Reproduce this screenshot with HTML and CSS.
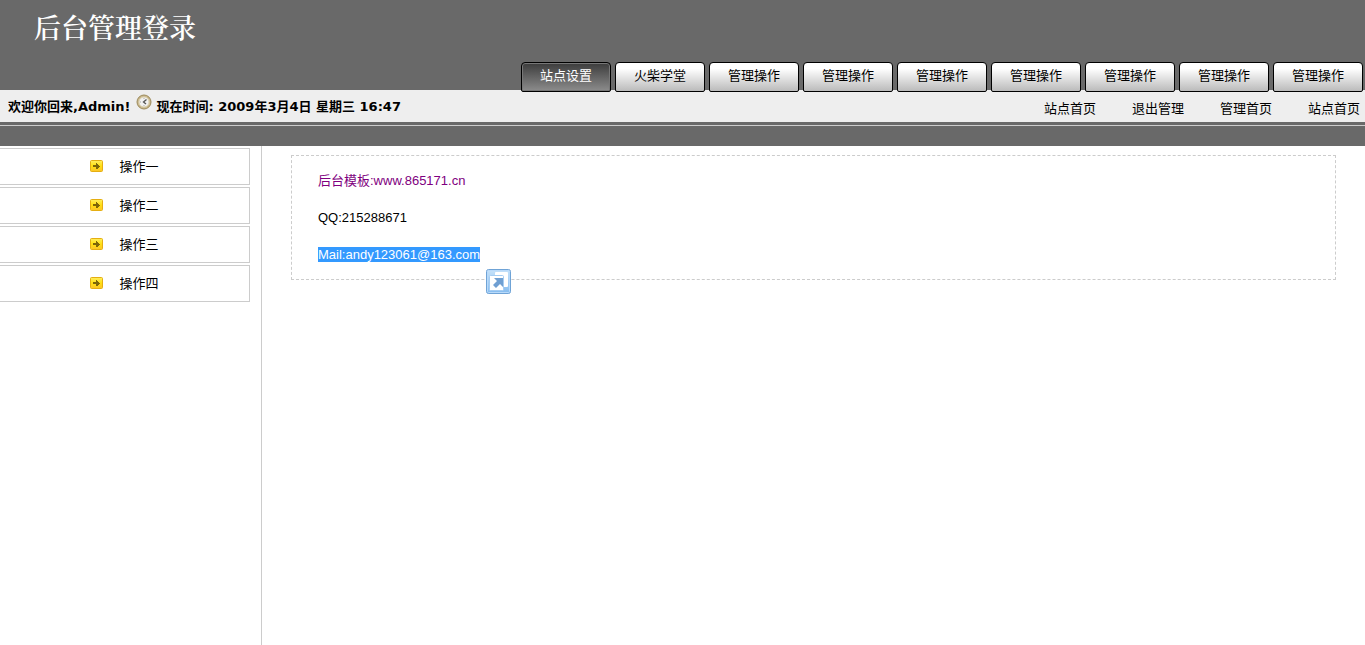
FILE: index.html
```html
<!DOCTYPE html>
<html lang="zh-CN">
<head>
    <meta charset="UTF-8">
    <meta name="viewport" content="width=device-width, initial-scale=1.0">
    <title>后台管理登录</title>
    <link rel="stylesheet" href="styles.css">
</head>
<body>
    <header class="header">
        <h1 class="title">后台管理登录</h1>
        <nav class="tabs">
            <a href="#" class="tab active">站点设置</a>
            <a href="#" class="tab">火柴学堂</a>
            <a href="#" class="tab">管理操作</a>
            <a href="#" class="tab">管理操作</a>
            <a href="#" class="tab">管理操作</a>
            <a href="#" class="tab">管理操作</a>
            <a href="#" class="tab">管理操作</a>
            <a href="#" class="tab">管理操作</a>
            <a href="#" class="tab">管理操作</a>
        </nav>
    </header>

    <div class="bar">
        <div class="welcome">
            <span>欢迎你回来,Admin!</span>
            <svg class="clock" width="16" height="18" viewBox="0 0 16 18">
                <circle cx="8" cy="9" r="7" fill="#c9b88c" stroke="#9c8a5c" stroke-width="1"/>
                <circle cx="8" cy="9" r="5" fill="#f1f1f1" stroke="#ddd3b4" stroke-width="1"/>
                <path d="M10.5 6.5L7.5 9l2.5 2" fill="none" stroke="#555" stroke-width="1.3"/>
                <path d="M4 9h1M8 5v1M8 12v1" stroke="#aaa"/>
            </svg>
            <span>现在时间: 2009年3月4日 星期三 16:47</span>
        </div>
        <nav class="links">
            <a href="#">站点首页</a>
            <a href="#">退出管理</a>
            <a href="#">管理首页</a>
            <a href="#">站点首页</a>
        </nav>
    </div>
    <div class="line"></div>

    <svg class="defs" width="0" height="0">
        <defs>
            <linearGradient id="gold" x1="0" y1="0" x2="0" y2="1">
                <stop offset="0" stop-color="#ffee60"/>
                <stop offset="0.5" stop-color="#ffdf10"/>
                <stop offset="1" stop-color="#fcc42a"/>
            </linearGradient>
            <linearGradient id="blue" x1="0" y1="0" x2="0" y2="1">
                <stop offset="0" stop-color="#c6e2fa"/>
                <stop offset="1" stop-color="#85bcef"/>
            </linearGradient>
            <symbol id="arrow" viewBox="0 0 13 12">
                <rect x="0.5" y="0.5" width="12" height="11" rx="1" fill="url(#gold)" stroke="#e5ae12"/>
                <path d="M3 5h3V3h1v1h1v1h1v1h1v1H9v1H8v1H6V7H3z" fill="#7d6608"/>
            </symbol>
        </defs>
    </svg>

    <div class="main">
        <ul class="menu">
            <li><a href="#"><svg class="arrow"><use href="#arrow"/></svg>操作一</a></li>
            <li><a href="#"><svg class="arrow"><use href="#arrow"/></svg>操作二</a></li>
            <li><a href="#"><svg class="arrow"><use href="#arrow"/></svg>操作三</a></li>
            <li><a href="#"><svg class="arrow"><use href="#arrow"/></svg>操作四</a></li>
        </ul>
        <div class="content">
            <div class="box">
                <p><a href="#" class="site">后台模板:www.865171.cn</a></p>
                <p>QQ:215288671</p>
                <p class="mail">
                    <span class="selected">Mail:andy123061@163.com</span>
                    <button class="popup" aria-label="打开">
                        <svg width="25" height="25" viewBox="0 0 25 25">
                            <rect x="0.5" y="0.5" width="24" height="24" rx="2" fill="url(#blue)" stroke="#6fa3d6"/>
                            <rect x="1.5" y="1.5" width="22" height="22" rx="1" fill="none" stroke="#b9dafa"/>
                            <rect x="9" y="3" width="13" height="15" rx="1" fill="#fff"/>
                            <rect x="3.5" y="6.5" width="14" height="15" rx="1" fill="#fff" stroke="#a5cdf3"/>
                            <path d="M8 9h9v9l-3-3-4 4-3-3 4-4z" fill="#6f9fd2"/>
                        </svg>
                    </button>
                </p>
            </div>
        </div>
    </div>
</body>
</html>
```

FILE: styles.css
```css
* {
    box-sizing: border-box;
}
body {
    margin: 0;
    min-height: 100vh;
    display: flex;
    flex-direction: column;
    background: #fff;
    color: #000;
    font-family: "Liberation Sans", Arial, "Noto Sans CJK SC", sans-serif;
    font-size: 13px;
    line-height: 17px;
}
a {
    color: inherit;
    text-decoration: none;
}
.header {
    height: 90px;
    display: flex;
    flex-direction: column;
    justify-content: space-between;
    background: #696969;
}
.title {
    margin: 0;
    padding: 7px 0 0 34px;
    color: #fff;
    font-family: "Noto Serif CJK SC", SimSun, "Noto Sans CJK SC", serif;
    font-size: 27px;
    font-weight: 600;
    line-height: 40px;
}
.tabs {
    display: flex;
    justify-content: flex-end;
    gap: 4px;
    margin-bottom: -2px;
    padding-right: 2px;
    position: relative;
    z-index: 1;
}
.tab {
    width: 90px;
    height: 30px;
    border: 1px solid #000;
    border-radius: 4px 4px 2px 2px;
    background: linear-gradient(#fff 20%, #bbb);
    line-height: 25px;
    text-align: center;
}
.tab.active {
    background: linear-gradient(#3c3c3c, #8c8c8c);
    box-shadow: inset 0 0 0 1px #777;
    color: #fff;
}
.bar {
    height: 32px;
    display: flex;
    justify-content: space-between;
    align-items: center;
    padding: 0 5px 0 8px;
    background: #eee;
}
.welcome {
    display: flex;
    align-items: center;
    gap: 5px;
    font-family: "Arial Black", "DejaVu Sans", "Noto Sans CJK SC", sans-serif;
    font-weight: bold;
}
.clock {
    margin-bottom: 8px;
}
.links {
    display: flex;
    gap: 36px;
    padding-top: 4px;
}
.line {
    height: 24px;
    padding-top: 3px;
    background: #696969;
}
.line::before {
    content: "";
    display: block;
    height: 1px;
    background: #ccc;
}
.defs {
    display: block;
}
.main {
    flex: 1;
    display: flex;
}
.menu {
    width: 262px;
    margin: 0;
    padding: 2px 11px 0 0;
    border-right: 1px solid #ccc;
    list-style: none;
}
.menu a {
    height: 37px;
    display: flex;
    align-items: center;
    justify-content: center;
    gap: 16px;
    margin-bottom: 2px;
    border: 1px solid #ccc;
    border-left: 0;
}
.arrow {
    width: 13px;
    height: 12px;
    margin-bottom: 2px;
}
.content {
    flex: 1;
    padding: 9px 29px;
}
.box {
    padding: 16px 26px;
    border: 1px dashed #ccc;
}
.box p {
    margin: 0 0 20px;
}
.box .mail {
    position: relative;
    width: fit-content;
    margin-bottom: 0;
}
.site {
    color: #800080;
}
.selected {
    background: #3399ff;
    color: #fff;
}
.popup {
    position: absolute;
    left: 100%;
    top: 100%;
    margin: 6px 0 0 6px;
    padding: 0;
    border: 0;
    background: none;
    cursor: pointer;
}
.popup svg {
    display: block;
}
```
